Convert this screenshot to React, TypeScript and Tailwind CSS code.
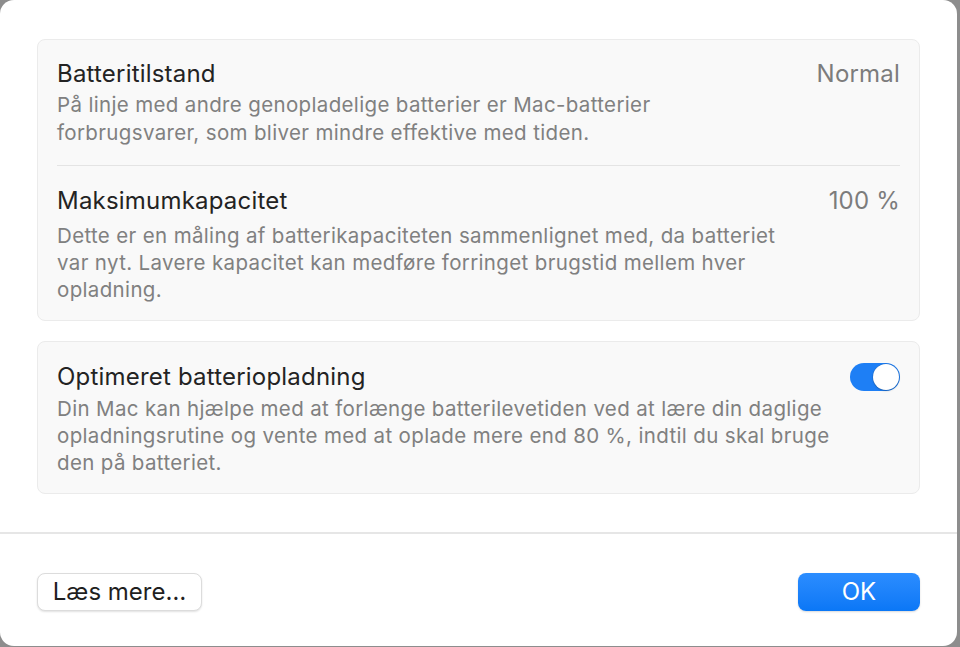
import { useState } from 'react';

const Toggle = ({ on, onChange }: { on: boolean; onChange: (v: boolean) => void }) => (
  <button
    type="button"
    onClick={() => onChange(!on)}
    className={`relative h-[28px] w-[50px] shrink-0 rounded-full transition-colors ${
      on ? 'bg-[#1e7ff5]' : 'bg-[#e2e2e2]'
    }`}
  >
    <span
      className={`absolute top-[1px] h-[26px] w-[26px] rounded-full bg-white shadow-[0_0_0_0.5px_rgba(0,0,0,0.15),0_1px_2px_rgba(0,0,0,0.2)] transition-all ${
        on ? 'left-[23px]' : 'left-[1px]'
      }`}
    />
  </button>
);

const App = () => {
  const [optimized, setOptimized] = useState(true);

  return (
    <div className="h-[647px] w-[960px] overflow-hidden bg-[#8d8d8d] font-['Inter','Liberation_Sans',sans-serif]">
      <div className="flex h-[646px] w-[957px] flex-col rounded-[14px] bg-white">
        <div className="flex flex-col gap-[20px] px-[37px] pt-[39px]">
          {/* Batteritilstand + kapacitet */}
          <div className="rounded-[8px] border border-[#ebebeb] bg-[#f9f9f9] px-[19px]">
            <div className="pb-[19px] pt-[20px]">
              <div className="flex items-center justify-between text-[24px] leading-[28px] tracking-[0.2px]">
                <span className="text-[#232323]">Batteritilstand</span>
                <span className="text-[#7c7c7c]">Normal</span>
              </div>
              <p className="mt-[3px] text-[20.5px] leading-[27.5px] tracking-[0.35px] text-[#808080]">
                På linje med andre genopladelige batterier er Mac-batterier
                <br />
                forbrugsvarer, som bliver mindre effektive med tiden.
              </p>
            </div>
            <div className="h-px bg-[#e4e4e4]" />
            <div className="pb-[17px] pt-[21px]">
              <div className="flex items-center justify-between text-[24px] leading-[28px] tracking-[0.2px]">
                <span className="text-[#232323]">Maksimumkapacitet</span>
                <span className="text-[#7c7c7c]">100 %</span>
              </div>
              <p className="mt-[7px] text-[20.5px] leading-[27px] tracking-[0.35px] text-[#808080]">
                Dette er en måling af batterikapaciteten sammenlignet med, da batteriet
                <br />
                var nyt. Lavere kapacitet kan medføre forringet brugstid mellem hver
                <br />
                opladning.
              </p>
            </div>
          </div>

          {/* Optimeret opladning */}
          <div className="rounded-[8px] border border-[#ebebeb] bg-[#f9f9f9] px-[19px] pb-[17px] pt-[21px]">
            <div className="flex items-center justify-between">
              <span className="text-[24px] leading-[28px] tracking-[0.2px] text-[#232323]">
                Optimeret batteriopladning
              </span>
              <Toggle on={optimized} onChange={setOptimized} />
            </div>
            <p className="mt-[4px] text-[20.5px] leading-[27px] tracking-[0.35px] text-[#808080]">
              Din Mac kan hjælpe med at forlænge batterilevetiden ved at lære din daglige
              <br />
              opladningsrutine og vente med at oplade mere end 80 %, indtil du skal bruge
              <br />
              den på batteriet.
            </p>
          </div>
        </div>

        <div className="mt-[38px] h-[2px] bg-[#e6e6e6]" />

        <div className="flex items-center justify-between px-[37px] pt-[39px]">
          <button
            type="button"
            className="h-[38px] w-[165px] rounded-[8px] border border-[#dcdcdc] bg-white text-[24px] text-[#1f1f1f] shadow-[0_1px_2px_rgba(0,0,0,0.12)]"
          >
            Læs mere…
          </button>
          <button
            type="button"
            className="h-[38px] w-[122px] rounded-[8px] bg-gradient-to-b from-[#2b8dff] to-[#0a77f6] text-[24px] text-white shadow-[0_1px_2px_rgba(0,0,0,0.15)]"
          >
            OK
          </button>
        </div>
      </div>
    </div>
  );
};

export default App;
